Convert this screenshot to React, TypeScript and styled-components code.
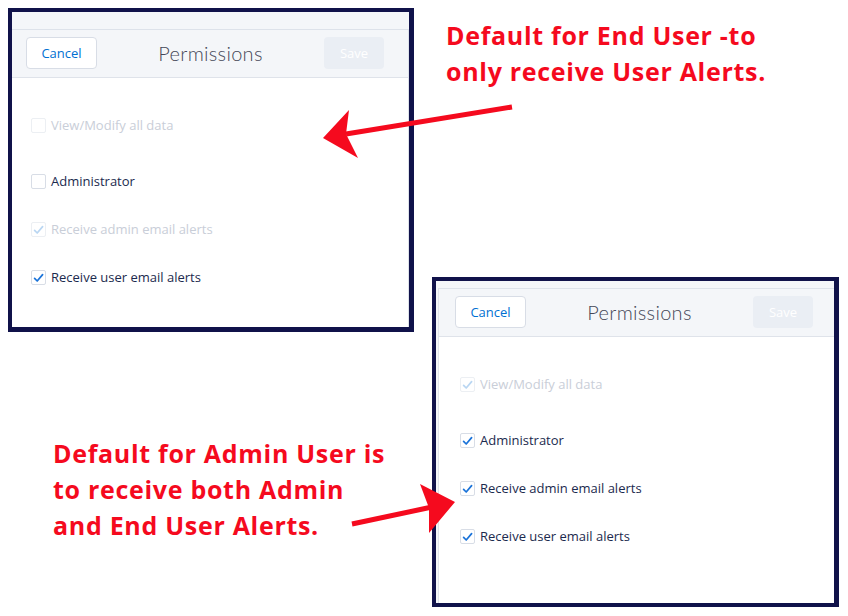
import React from 'react';
import styled, { createGlobalStyle } from 'styled-components';

const Global = createGlobalStyle`
  html, body { margin: 0; padding: 0; background: #ffffff; }
  body { font-family: "Open Sans", "Liberation Sans", sans-serif; }
`;

const NAVY = '#10124a';
const RED = '#f50a1e';

const Page = styled.div`
  position: relative;
  width: 848px;
  height: 616px;
  overflow: hidden;
  display: grid;
  grid-template-columns: 432px 1fr;
  background: #fff;
`;

const Column = styled.div<{ $pt?: number }>`
  display: flex;
  flex-direction: column;
  align-items: flex-start;
  padding-top: ${(p) => p.$pt ?? 0}px;
`;

const Frame = styled.div<{ $w: number; $h: number; $ml: number; $mt: number; $bw: string }>`
  box-sizing: border-box;
  width: ${(p) => p.$w}px;
  height: ${(p) => p.$h}px;
  margin-left: ${(p) => p.$ml}px;
  margin-top: ${(p) => p.$mt}px;
  border-style: solid;
  border-color: ${NAVY};
  border-width: ${(p) => p.$bw};
  background: #f4f6f9;
  overflow: hidden;
  display: flex;
  flex-direction: column;
`;

const Viewport = styled.div<{ $top: number; $shift: number }>`
  flex: 1;
  display: flex;
  padding-top: ${(p) => p.$top}px;
  padding-left: ${(p) => Math.max(p.$shift, 0)}px;
  min-height: 0;
`;

const Modal = styled.div<{ $shift: number }>`
  box-sizing: border-box;
  width: 400px;
  flex-shrink: 0;
  margin-left: ${(p) => Math.min(p.$shift, 0)}px;
  background: #ffffff;
  border: 1px solid #dde2ea;
  border-bottom: none;
  display: flex;
  flex-direction: column;
`;

const Header = styled.div`
  display: flex;
  align-items: center;
  background: #f4f6f9;
  border-bottom: 1px solid #dfe3ea;
  padding: 7px 24px 8px 16px;
`;

const CancelButton = styled.div`
  box-sizing: border-box;
  width: 71px;
  height: 32px;
  display: flex;
  align-items: center;
  justify-content: center;
  background: #fff;
  border: 1px solid #d8dde6;
  border-radius: 4px;
  color: #0070d2;
  font-size: 13px;
`;

const SaveButton = styled.div`
  box-sizing: border-box;
  width: 60px;
  height: 32px;
  display: flex;
  align-items: center;
  justify-content: center;
  background: #eaeef4;
  border-radius: 4px;
  color: #ffffff;
  font-size: 13px;
`;

const Title = styled.div`
  flex: 1;
  text-align: center;
  font-family: Lato, "Open Sans", sans-serif;
  font-weight: 300;
  font-size: 20px;
  color: #444757;
  letter-spacing: 0.3px;
`;

const Body = styled.div`
  display: flex;
  flex-direction: column;
  padding: 37px 0 0 21px;
`;

const Row = styled.div<{ $gap: number }>`
  display: flex;
  align-items: center;
  height: 20px;
  gap: 5px;
  margin-bottom: ${(p) => p.$gap}px;
`;

const Box = styled.div<{ $disabled?: boolean }>`
  box-sizing: border-box;
  width: 15px;
  height: 15px;
  border: 1px solid ${(p) => (p.$disabled ? '#eceff3' : '#d8dde6')};
  border-radius: 2px;
  background: #fff;
  display: flex;
  align-items: center;
  justify-content: center;
`;

const Label = styled.span<{ $disabled?: boolean }>`
  font-size: 13px;
  color: ${(p) => (p.$disabled ? '#c9ced8' : '#1b2a4e')};
  white-space: nowrap;
`;

const Note = styled.div<{ $ml: number; $mt: number }>`
  margin-left: ${(p) => p.$ml}px;
  margin-top: ${(p) => p.$mt}px;
  font-family: "Open Sans", Lato, sans-serif;
  font-weight: 700;
  font-size: 25px;
  letter-spacing: 0.7px;
  line-height: 36px;
  color: ${RED};
  white-space: nowrap;
`;

const Overlay = styled.svg`
  position: absolute;
  left: 0;
  top: 0;
  width: 848px;
  height: 616px;
  pointer-events: none;
`;

type Item = { label: string; checked: boolean; disabled: boolean };

function Check({ checked, disabled }: { checked: boolean; disabled: boolean }) {
  return (
    <Box $disabled={disabled}>
      {checked && (
        <svg width="13" height="13" viewBox="0 0 13 13">
          <path
            d="M2.6 7.4 L5.2 10 L10.6 3.6"
            fill="none"
            stroke={disabled ? '#b9d6f2' : '#1a73d9'}
            strokeWidth="1.7"
            strokeLinecap="round"
            strokeLinejoin="round"
          />
        </svg>
      )}
    </Box>
  );
}

function PermissionsModal({ items, shift }: { items: Item[]; shift: number }) {
  const gaps = [36, 28, 28, 0];
  return (
    <Modal $shift={shift}>
      <Header>
        <CancelButton>Cancel</CancelButton>
        <Title>Permissions</Title>
        <SaveButton>Save</SaveButton>
      </Header>
      <Body>
        {items.map((it, i) => (
          <Row key={it.label} $gap={gaps[i]}>
            <Check checked={it.checked} disabled={it.disabled} />
            <Label $disabled={it.disabled}>{it.label}</Label>
          </Row>
        ))}
      </Body>
    </Modal>
  );
}

const endUser: Item[] = [
  { label: 'View/Modify all data', checked: false, disabled: true },
  { label: 'Administrator', checked: false, disabled: false },
  { label: 'Receive admin email alerts', checked: true, disabled: true },
  { label: 'Receive user email alerts', checked: true, disabled: false },
];

const adminUser: Item[] = [
  { label: 'View/Modify all data', checked: true, disabled: true },
  { label: 'Administrator', checked: true, disabled: false },
  { label: 'Receive admin email alerts', checked: true, disabled: false },
  { label: 'Receive user email alerts', checked: true, disabled: false },
];

export default function App() {
  return (
    <>
      <Global />
      <Page>
        <Column $pt={8}>
          <Frame $w={406} $h={324} $ml={8} $mt={0} $bw="4px 5px 5px 4px">
            <Viewport $top={17} $shift={-3}>
              <PermissionsModal items={endUser} shift={-3} />
            </Viewport>
          </Frame>
          <Note $ml={53} $mt={103}>
            Default for Admin User is
            <br />
            to receive both Admin
            <br />
            and End User Alerts.
          </Note>
        </Column>
        <Column>
          <Note $ml={14} $mt={17}>
            Default for End User -to
            <br />
            only receive User Alerts.
          </Note>
          <Frame $w={407} $h={330} $ml={0} $mt={188} $bw="4px 5px 4px 4px">
            <Viewport $top={7} $shift={2}>
              <PermissionsModal items={adminUser} shift={2} />
            </Viewport>
          </Frame>
        </Column>
        <Overlay viewBox="0 0 848 616">
          <line x1="512" y1="107" x2="346" y2="134" stroke={RED} strokeWidth="5" />
          <polygon points="323,138 349,110 346,134 358,158" fill={RED} />
          <line x1="352" y1="524" x2="432" y2="507" stroke={RED} strokeWidth="5" />
          <polygon points="455,502 420,484 429,508 429,533" fill={RED} />
        </Overlay>
      </Page>
    </>
  );
}
